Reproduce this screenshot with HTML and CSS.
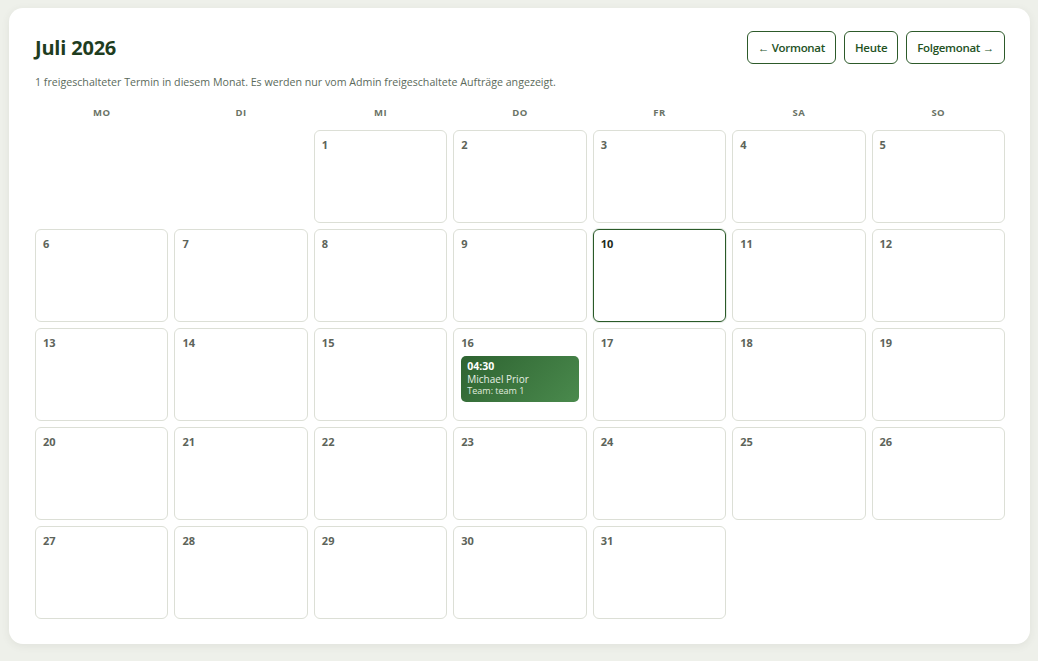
FILE: index.html
```html
<!DOCTYPE html>
<html lang="de">
<head>
<meta charset="utf-8">
<title>Kalender</title>
<link rel="stylesheet" href="styles.css">
</head>
<body>
<div class="card">
  <div class="header">
    <h1 class="title">Juli 2026</h1>
    <div class="nav">
      <button class="btn">← Vormonat</button>
      <button class="btn">Heute</button>
      <button class="btn">Folgemonat →</button>
    </div>
  </div>
  <p class="subtitle">1 freigeschalteter Termin in diesem Monat. Es werden nur vom Admin freigeschaltete Aufträge angezeigt.</p>
  <div class="weekdays">
    <div>MO</div><div>DI</div><div>MI</div><div>DO</div><div>FR</div><div>SA</div><div>SO</div>
  </div>
  <div class="grid">
    <div class="empty"></div>
    <div class="empty"></div>
    <div class="day"><span class="num">1</span></div>
    <div class="day"><span class="num">2</span></div>
    <div class="day"><span class="num">3</span></div>
    <div class="day"><span class="num">4</span></div>
    <div class="day"><span class="num">5</span></div>
    <div class="day"><span class="num">6</span></div>
    <div class="day"><span class="num">7</span></div>
    <div class="day"><span class="num">8</span></div>
    <div class="day"><span class="num">9</span></div>
    <div class="day today"><span class="num">10</span></div>
    <div class="day"><span class="num">11</span></div>
    <div class="day"><span class="num">12</span></div>
    <div class="day"><span class="num">13</span></div>
    <div class="day"><span class="num">14</span></div>
    <div class="day"><span class="num">15</span></div>
    <div class="day"><span class="num">16</span>
      <div class="event">
        <div class="ev-time">04:30</div>
        <div class="ev-name">Michael Prior</div>
        <div class="ev-team">Team: team 1</div>
      </div>
    </div>
    <div class="day"><span class="num">17</span></div>
    <div class="day"><span class="num">18</span></div>
    <div class="day"><span class="num">19</span></div>
    <div class="day"><span class="num">20</span></div>
    <div class="day"><span class="num">21</span></div>
    <div class="day"><span class="num">22</span></div>
    <div class="day"><span class="num">23</span></div>
    <div class="day"><span class="num">24</span></div>
    <div class="day"><span class="num">25</span></div>
    <div class="day"><span class="num">26</span></div>
    <div class="day"><span class="num">27</span></div>
    <div class="day"><span class="num">28</span></div>
    <div class="day"><span class="num">29</span></div>
    <div class="day"><span class="num">30</span></div>
    <div class="day"><span class="num">31</span></div>
  </div>
</div>
</body>
</html>
```
FILE: styles.css
```css
* { box-sizing: border-box; }
html, body { margin: 0; padding: 0; }
body {
  background: #eef0ea;
  font-family: "Open Sans", "Noto Sans", "Liberation Sans", sans-serif;
  padding: 8px 8px 0 9px;
  height: 661px;
  overflow: hidden;
}
.card {
  background: #ffffff;
  border-radius: 14px;
  box-shadow: 0 2px 8px rgba(60, 70, 50, 0.08);
  padding: 23px 25px 25px 26px;
  height: 636px;
}
.header {
  display: flex;
  justify-content: space-between;
  align-items: center;
  height: 33px;
}
.title {
  margin: 0;
  font-size: 20px;
  font-weight: 700;
  color: #1f3d1f;
  letter-spacing: -0.2px;
}
.nav {
  display: flex;
  gap: 8px;
}
.btn {
  font-family: inherit;
  font-size: 11.5px;
  font-weight: 600;
  letter-spacing: -0.3px;
  color: #24521f;
  background: #fff;
  border: 1px solid #2d5a2a;
  border-radius: 6px;
  height: 33px;
  padding: 0 10px;
  cursor: pointer;
}
.subtitle {
  margin: 11px 0 0;
  font-size: 10.65px;
  color: #5b6a5b;
  line-height: 14px;
}
.weekdays {
  display: grid;
  grid-template-columns: repeat(7, 1fr);
  gap: 6px;
  margin-top: 17px;
  text-align: center;
  font-size: 9.5px;
  font-weight: 700;
  color: #6a7366;
  letter-spacing: 0.5px;
  line-height: 14px;
}
.grid {
  display: grid;
  grid-template-columns: repeat(7, 1fr);
  grid-auto-rows: 93px;
  gap: 6px;
  margin-top: 10px;
}
.day {
  border: 1px solid #dcdfd6;
  border-radius: 6px;
  padding: 7px 7px;
  display: flex;
  flex-direction: column;
}
.day.today {
  border-color: #2a5a28;
  box-shadow: 0 0 0 1px rgba(45, 90, 42, 0.12);
}
.num {
  font-size: 11px;
  font-weight: 700;
  color: #5d645a;
  line-height: 14px;
}
.today .num { color: #1e2b1c; }
.event {
  margin-top: 6px;
  border-radius: 5px;
  background: linear-gradient(135deg, #2e6331 0%, #4a8a4d 100%);
  padding: 4px 6px 4px;
  color: #fff;
  line-height: 12.5px;
}
.ev-time { font-size: 10.5px; font-weight: 700; }
.ev-name { font-size: 10px; color: #e6efe5; }
.ev-team { font-size: 9px; color: #e0ebdf; }
```
